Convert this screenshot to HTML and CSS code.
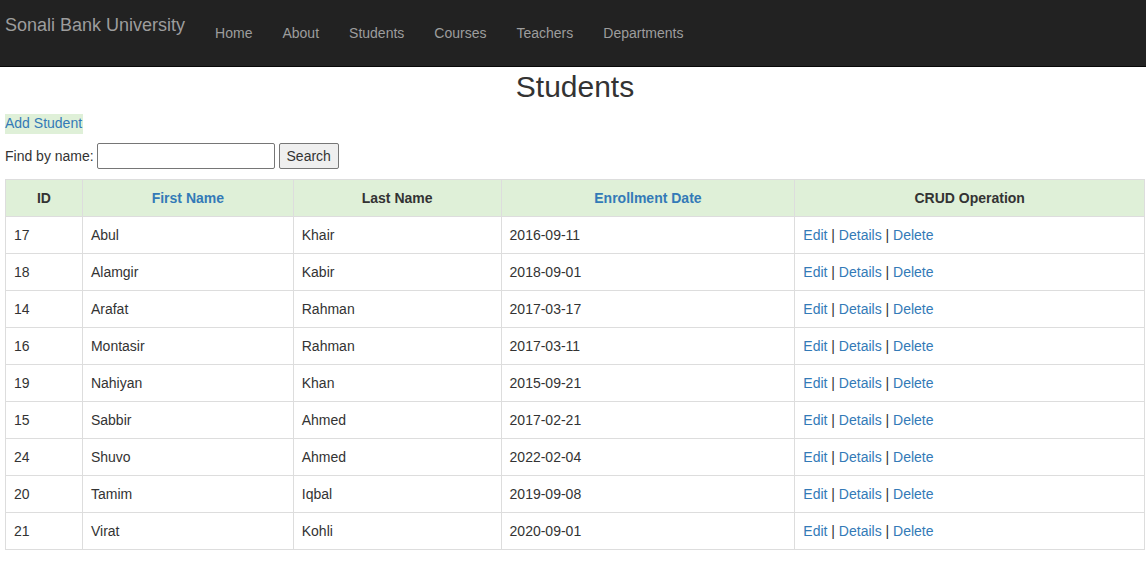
FILE: index.html
```html
<!DOCTYPE html>
<html>
<head>
<meta charset="utf-8">
<title>Students</title>
<link rel="stylesheet" href="styles.css">
</head>
<body>
<nav class="navbar">
  <a class="brand" href="#">Sonali Bank University</a>
  <ul class="nav">
    <li><a href="#">Home</a></li>
    <li><a href="#">About</a></li>
    <li><a href="#">Students</a></li>
    <li><a href="#">Courses</a></li>
    <li><a href="#">Teachers</a></li>
    <li><a href="#">Departments</a></li>
  </ul>
</nav>
<main class="content">
  <h2 class="title">Students</h2>
  <p class="add"><a href="#" class="add-link">Add Student</a></p>
  <form class="search">
    <label>Find by name:</label>
    <input type="text" class="search-input">
    <button type="button" class="search-btn">Search</button>
  </form>
  <table class="grid">
    <colgroup>
      <col class="c1"><col class="c2"><col class="c3"><col class="c4"><col class="c5">
    </colgroup>
    <thead>
      <tr>
        <th>ID</th>
        <th><a href="#">First Name</a></th>
        <th>Last Name</th>
        <th><a href="#">Enrollment Date</a></th>
        <th>CRUD Operation</th>
      </tr>
    </thead>
    <tbody>
      <tr><td>17</td><td>Abul</td><td>Khair</td><td>2016-09-11</td><td><a href="#">Edit</a> | <a href="#">Details</a> | <a href="#">Delete</a></td></tr>
      <tr><td>18</td><td>Alamgir</td><td>Kabir</td><td>2018-09-01</td><td><a href="#">Edit</a> | <a href="#">Details</a> | <a href="#">Delete</a></td></tr>
      <tr><td>14</td><td>Arafat</td><td>Rahman</td><td>2017-03-17</td><td><a href="#">Edit</a> | <a href="#">Details</a> | <a href="#">Delete</a></td></tr>
      <tr><td>16</td><td>Montasir</td><td>Rahman</td><td>2017-03-11</td><td><a href="#">Edit</a> | <a href="#">Details</a> | <a href="#">Delete</a></td></tr>
      <tr><td>19</td><td>Nahiyan</td><td>Khan</td><td>2015-09-21</td><td><a href="#">Edit</a> | <a href="#">Details</a> | <a href="#">Delete</a></td></tr>
      <tr><td>15</td><td>Sabbir</td><td>Ahmed</td><td>2017-02-21</td><td><a href="#">Edit</a> | <a href="#">Details</a> | <a href="#">Delete</a></td></tr>
      <tr><td>24</td><td>Shuvo</td><td>Ahmed</td><td>2022-02-04</td><td><a href="#">Edit</a> | <a href="#">Details</a> | <a href="#">Delete</a></td></tr>
      <tr><td>20</td><td>Tamim</td><td>Iqbal</td><td>2019-09-08</td><td><a href="#">Edit</a> | <a href="#">Details</a> | <a href="#">Delete</a></td></tr>
      <tr><td>21</td><td>Virat</td><td>Kohli</td><td>2020-09-01</td><td><a href="#">Edit</a> | <a href="#">Details</a> | <a href="#">Delete</a></td></tr>
    </tbody>
  </table>
</main>
</body>
</html>
```
FILE: styles.css
```css
* { box-sizing: border-box; }
html, body { margin: 0; padding: 0; }
body {
  font-family: "Liberation Sans", Arial, sans-serif;
  font-size: 14px;
  line-height: 20px;
  color: #333;
  background: #fff;
}
a { color: #337ab7; text-decoration: none; }

.navbar {
  display: flex;
  align-items: flex-start;
  height: 67px;
  background: #222;
  border-bottom: 1px solid #080808;
}
.brand {
  font-size: 18px;
  line-height: 20px;
  color: #9d9d9d;
  padding: 15px 15px 15px 5px;
}
.nav {
  display: flex;
  list-style: none;
  margin: 0;
  padding: 0;
}
.nav a {
  display: block;
  color: #9d9d9d;
  padding: 23px 15px 15px;
  line-height: 20px;
}

.content { padding: 0 1px 0 5px; }
.title {
  margin: 3px 0 10px;
  text-align: center;
  font-size: 30px;
  font-weight: 500;
  line-height: 33px;
}
.add { margin: 0 0 9px; }
.add-link { background: #dff0d8; display: inline-block; padding-right: 1px; line-height: 19px; padding-bottom: 1px; }

.search {
  display: flex;
  align-items: center;
  height: 26px;
  margin: 0 0 10px;
}
.search label { margin-right: 3px; }
.search-input {
  width: 178px;
  height: 26px;
  border: 1px solid #767676;
  border-radius: 2px;
  margin: 0 4px 0 0;
  font: inherit;
}
.search-btn {
  height: 26px;
  width: 60px;
  padding: 0;
  border: 1px solid #767676;
  border-radius: 2px;
  background: #efefef;
  font: inherit;
  color: #333;
}

.grid {
  width: 1140px;
  border-collapse: collapse;
  border: 1px solid #ddd;
}
.c1 { width: 77px; }
.c2 { width: 211px; }
.c3 { width: 208px; }
.c4 { width: 294px; }
.c5 { width: 350px; }
.grid th, .grid td {
  border: 1px solid #ddd;
  padding: 8px;
  line-height: 20px;
  height: 37px;
}
.grid th {
  background: #dff0d8;
  text-align: center;
  font-weight: bold;
}
.grid td { text-align: left; }
```
